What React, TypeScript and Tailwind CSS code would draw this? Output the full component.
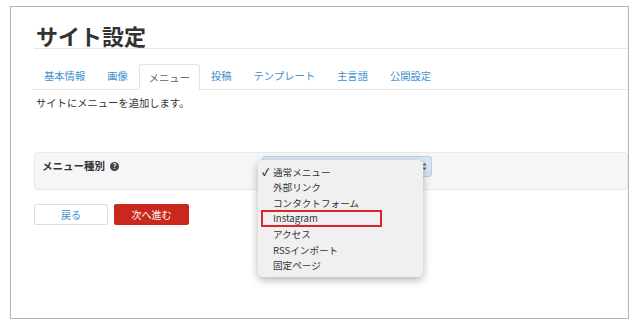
const tabs = ['基本情報', '画像', 'メニュー', '投稿', 'テンプレート', '主言語', '公開設定'];

const options = ['通常メニュー', '外部リンク', 'コンタクトフォーム', 'Instagram', 'アクセス', 'RSSインポート', '固定ページ'];

export default function App() {
  return (
    <div
      className="w-[640px] h-[329px] bg-white overflow-hidden pt-[6px] pl-[10px]"
      style={{ fontFamily: '"Noto Sans CJK JP", "Liberation Sans", sans-serif' }}
    >
      <div className="relative w-[619px] h-[313px] border border-[#b5b5b5] pl-[23px] text-[#333]">
        <h1 className="pt-[14px] pl-[2px] h-[42px] text-[22px] leading-[28px] font-bold text-[#333] border-b border-[#e6e6e6]">
          サイト設定
        </h1>

        <div className="mt-[15px] flex items-end h-[26px] border-b border-[#e6e6e6] -ml-px">
          {tabs.map((t) => {
            const active = t === 'メニュー';
            return (
              <div
                key={t}
                className={
                  active
                    ? 'h-[26px] px-[9px] flex items-center text-[10.3px] text-[#666] border border-b-0 border-[#e3e3e3] rounded-t-[3px] bg-white -mb-px'
                    : 'h-[26px] px-[11px] flex items-center text-[10.3px] text-[#3d8fcf]'
                }
              >
                {t}
              </div>
            );
          })}
        </div>

        <p className="mt-[6px] pl-[2px] text-[10.3px] leading-[14px]">サイトにメニューを追加します。</p>

        <div className="mt-[42px] h-[38px] bg-[#f6f6f6] border border-[#e8e8e8] rounded-[3px] flex items-start pt-[6px] pl-[7px]">
          <div className="w-[220px] shrink-0 flex items-center">
            <span className="text-[10.5px] font-bold leading-[14px]">メニュー種別</span>
            <span className="ml-[5px] w-[9px] h-[9px] rounded-full bg-[#444] text-white text-[7px] font-bold leading-[9px] flex items-center justify-center">
              ?
            </span>
          </div>
          <div className="mt-[-3px] w-[170px] h-[21px] rounded-[3px] bg-[#dbe6f4] border border-[#b8cde6] flex items-center justify-end pr-[4px]">
            <svg width="5" height="9" viewBox="0 0 5 9" className="text-[#666]">
              <path d="M0.5 3.5 L2.5 0.8 L4.5 3.5 Z M0.5 5.5 L2.5 8.2 L4.5 5.5 Z" fill="currentColor" />
            </svg>
          </div>
        </div>

        <div className="mt-[14px] flex gap-[6px]">
          <button className="w-[74px] h-[21px] bg-white border border-[#dddddd] rounded-[2px] text-[10px] text-[#3d8fcf]">
            戻る
          </button>
          <button className="w-[75px] h-[21px] bg-[#c9291d] rounded-[2px] text-[10px] text-white">次へ進む</button>
        </div>

        <div className="absolute left-[247px] top-[153px] w-[165px] h-[117px] bg-[#f0f0f0] rounded-[5px] shadow-[0_3px_8px_rgba(0,0,0,0.3)] pt-[4px]">
          {options.map((o, i) => (
            <div key={o} className="relative h-[15.6px] flex items-center pl-[15px] text-[9.6px] text-[#333]">
              {i === 0 && <span className="absolute left-[4px] text-[10px] font-bold">✓</span>}
              {o === 'Instagram' && (
                <span className="absolute left-[3px] top-[-1px] w-[121px] h-[17px] border-2 border-[#d8262b]" />
              )}
              <span className="relative">{o}</span>
            </div>
          ))}
        </div>
      </div>
    </div>
  );
}
